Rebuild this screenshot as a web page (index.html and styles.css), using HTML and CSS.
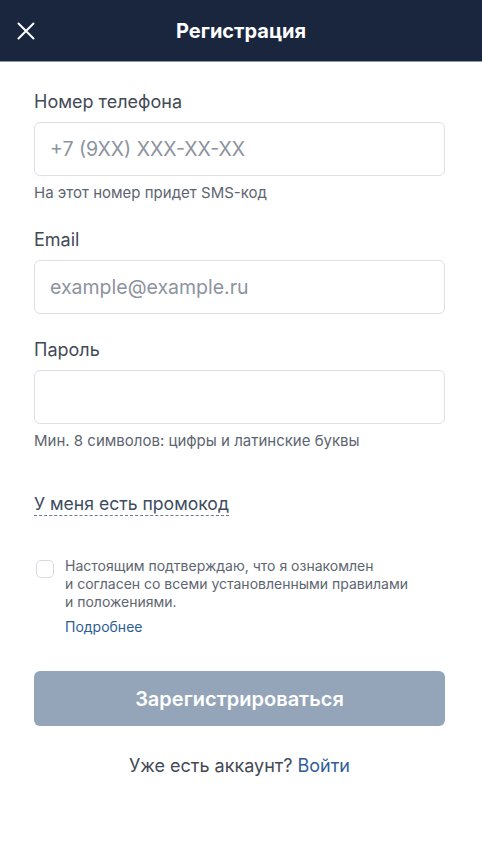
FILE: index.html
```html
<!DOCTYPE html>
<html lang="ru">
<head>
<meta charset="utf-8">
<link rel="stylesheet" href="styles.css">
</head>
<body>
<header class="topbar">
  <button class="close" aria-label="Закрыть">
    <svg width="18" height="18" viewBox="0 0 18 18"><path d="M1.5 1.5L16.5 16.5M16.5 1.5L1.5 16.5" stroke="#fff" stroke-width="2" stroke-linecap="round"/></svg>
  </button>
  <h1 class="title">Регистрация</h1>
</header>
<main class="form">
  <div class="field">
    <label class="label">Номер телефона</label>
    <div class="input"><span class="placeholder">+7 (9XX) XXX-XX-XX</span></div>
    <div class="hint">На этот номер придет SMS-код</div>
  </div>
  <div class="field field-email">
    <label class="label">Email</label>
    <div class="input"><span class="placeholder">example@example.ru</span></div>
  </div>
  <div class="field field-pass">
    <label class="label">Пароль</label>
    <div class="input"></div>
    <div class="hint">Мин. 8 символов: цифры и латинские буквы</div>
  </div>
  <div class="promo"><span class="promo-link">У меня есть промокод</span></div>
  <div class="agree">
    <span class="checkbox"></span>
    <div class="agree-text">
      <p>Настоящим подтверждаю, что я ознакомлен<br>и согласен со всеми установленными правилами<br>и положениями.</p>
      <a class="more">Подробнее</a>
    </div>
  </div>
  <button class="submit">Зарегистрироваться</button>
  <div class="login">Уже есть аккаунт? <a class="login-link">Войти</a></div>
</main>
</body>
</html>
```
FILE: styles.css
```css
* { box-sizing: border-box; }
html, body { margin: 0; padding: 0; background: #fff; }
body { font-family: Inter, "Noto Sans", sans-serif; color: #434a55; }
.topbar {
  height: 62px;
  background: #1a263d;
  border-bottom: 1px solid #8e99a8;
  display: flex;
  align-items: center;
  justify-content: center;
  position: relative;
}
.close {
  position: absolute;
  left: 17px;
  top: 22px;
  width: 18px; height: 18px;
  padding: 0; border: 0; background: none;
  display: flex;
}
.title {
  margin: 0;
  color: #fff;
  font-size: 20px;
  font-weight: 700;
}
.form {
  padding: 29px 37px 0 34px;
  display: flex;
  flex-direction: column;
}
.field { display: flex; flex-direction: column; }
.label {
  font-size: 18px;
  line-height: 22px;
  color: #434a55;
  margin-bottom: 9px;
}
.field-email { margin-top: 26px; }
.field-pass { margin-top: 25px; }
.input {
  height: 54px;
  border: 1px solid #dcdfe4;
  border-radius: 6px;
  display: flex;
  align-items: center;
  padding: 0 15px;
}
.placeholder { font-size: 19.5px; color: #8c939e; }
.hint {
  font-size: 15px;
  line-height: 20px;
  color: #5d6570;
  margin-top: 7px;
}
.promo { margin-top: 42px; }
.promo-link {
  display: inline-block;
  font-size: 17.6px;
  line-height: 22px;
  color: #3e4b60;
  border-bottom: 1px dashed #6d7a8e;
}
.agree {
  display: flex;
  margin-top: 41px;
  gap: 11px;
}
.checkbox {
  width: 18px; height: 18px;
  border: 1px solid #d6dae0;
  border-radius: 5px;
  margin-left: 2px;
  margin-top: 3px;
  flex: none;
}
.agree-text { display: flex; flex-direction: column; }
.agree-text p {
  margin: 0;
  font-size: 14px;
  line-height: 18px;
  color: #5d6570;
}
.more {
  margin-top: 7px;
  font-size: 14px;
  line-height: 18px;
  color: #2e5d97;
}
.submit {
  margin-top: 35px;
  height: 55px;
  border: 0;
  border-radius: 6px;
  background: #94a5b9;
  color: #fff;
  font-family: Inter, "Noto Sans", sans-serif;
  font-size: 20px;
  font-weight: 600;
}
.login {
  margin-top: 29px;
  text-align: center;
  font-size: 18px;
  line-height: 22px;
  color: #434a55;
}
.login-link { color: #2e5d97; }
```
